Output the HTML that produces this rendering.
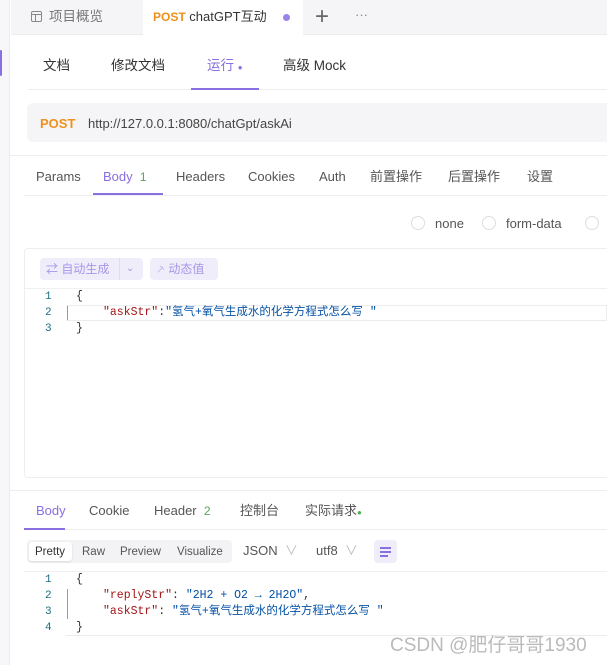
<!DOCTYPE html>
<html><head><meta charset="utf-8"><style>
*{margin:0;padding:0;box-sizing:border-box}
body{width:607px;height:665px;overflow:hidden;background:#fff;font-family:"Liberation Sans","Noto Sans CJK SC",sans-serif;color:#333;position:relative;font-size:13px}
.a{position:absolute;white-space:nowrap;line-height:16px}
.mono{font-family:"Liberation Mono","Noto Sans CJK SC",monospace;font-size:11.5px}
.ln{color:#1a6e80;font-family:"Liberation Mono",monospace;font-size:11px}
</style></head><body>
<div class="a" style="left:0;top:0;width:10px;height:665px;background:#f7f7f9;border-right:1px solid #ececef"></div>
<div class="a" style="left:0;top:50px;width:2px;height:26px;background:#8a6fe0;border-radius:2px"></div>
<div class="a" style="left:11px;top:0;width:596px;height:35px;background:#f5f5f7;border-bottom:1px solid #ececef"></div>
<div class="a" style="left:143px;top:0;width:160px;height:36px;background:#fff"></div>
<div class="a" style="left:31px;top:11px;width:11px;height:11px;border:1.3px solid #888;border-radius:2px"></div>
<div class="a" style="left:31px;top:14px;width:11px;height:1px;background:#888"></div>
<div class="a" style="left:35px;top:14px;width:1px;height:7px;background:#888"></div>
<div class="a" style="left:49px;top:9px;color:#777;font-size:13.5px">项目概览</div>
<div class="a" style="left:153px;top:9px;font-size:13px"><b style="color:#f0901c;font-size:12px">POST</b> chatGPT互动</div>
<div class="a" style="left:283px;top:14px;width:7px;height:7px;border-radius:50%;background:#9a82e6"></div>
<div class="a" style="left:315px;top:5px;font-size:24px;line-height:24px;color:#666;font-weight:300">+</div>
<div class="a" style="left:355px;top:7px;color:#888">···</div>
<div class="a" style="left:43px;top:58px;font-size:13.5px">文档</div>
<div class="a" style="left:111px;top:58px;font-size:13.5px">修改文档</div>
<div class="a" style="left:207px;top:58px;font-size:13.5px;color:#8a6fe0">运行 <span style="font-size:8px">●</span></div>
<div class="a" style="left:283px;top:58px;font-size:13.5px">高级 Mock</div>
<div class="a" style="left:28px;top:89px;width:579px;height:1px;background:#eee"></div>
<div class="a" style="left:191px;top:88px;width:68px;height:2px;background:#8a6fe0"></div>
<div class="a" style="left:27px;top:103px;width:590px;height:39px;background:#f5f5f7;border-radius:6px"></div>
<div class="a" style="left:40px;top:116px"><b style="color:#f0901c">POST</b></div>
<div class="a" style="left:88px;top:116px;color:#444">http://127.0.0.1:8080/chatGpt/askAi</div>
<div class="a" style="left:10px;top:155px;width:597px;height:1px;background:#eee"></div>
<div class="a" style="left:36px;top:169px;color:#555">Params</div>
<div class="a" style="left:103px;top:169px;color:#8a6fe0">Body &nbsp;<span style="color:#58a55c;font-size:12px">1</span></div>
<div class="a" style="left:176px;top:169px;color:#555">Headers</div>
<div class="a" style="left:248px;top:169px;color:#555">Cookies</div>
<div class="a" style="left:319px;top:169px;color:#555">Auth</div>
<div class="a" style="left:370px;top:169px;color:#555">前置操作</div>
<div class="a" style="left:448px;top:169px;color:#555">后置操作</div>
<div class="a" style="left:527px;top:169px;color:#555">设置</div>
<div class="a" style="left:24px;top:195px;width:583px;height:1px;background:#eee"></div>
<div class="a" style="left:93px;top:193px;width:70px;height:2px;background:#8a6fe0"></div>
<div class="a" style="left:411px;top:216px;width:14px;height:14px;border:1px solid #ddd;border-radius:50%"></div>
<div class="a" style="left:435px;top:216px;color:#555">none</div>
<div class="a" style="left:482px;top:216px;width:14px;height:14px;border:1px solid #ddd;border-radius:50%"></div>
<div class="a" style="left:506px;top:216px;color:#555">form-data</div>
<div class="a" style="left:585px;top:216px;width:14px;height:14px;border:1px solid #ddd;border-radius:50%"></div>
<div class="a" style="left:24px;top:248px;width:600px;height:230px;border:1px solid #eee;border-radius:4px"></div>
<div class="a" style="left:25px;top:288px;width:582px;height:1px;background:#f0f0f0"></div>
<div class="a" style="left:40px;top:258px;width:103px;height:22px;background:#f0edfb;border-radius:4px"></div>
<div class="a" style="left:119px;top:258px;width:1px;height:22px;background:#e0dbf5"></div>
<div class="a" style="left:46px;top:261px;font-size:12px;color:#a796e8">⇄ 自动生成</div>
<div class="a" style="left:126px;top:261px;font-size:10px;color:#a796e8">⌄</div>
<div class="a" style="left:150px;top:258px;width:68px;height:22px;background:#f0edfb;border-radius:4px"></div>
<div class="a" style="left:156px;top:261px;font-size:12px;color:#a796e8">⸕ 动态值</div>
<div class="a ln" style="left:45px;top:289px">1</div>
<div class="a ln" style="left:45px;top:305px">2</div>
<div class="a ln" style="left:45px;top:321px">3</div>
<div class="a mono" style="left:76px;top:289px">{</div>
<div class="a" style="left:66px;top:305px;width:541px;height:16px;border:1px solid #ececec;border-left:none"></div>
<div class="a" style="left:67px;top:306px;width:1px;height:14px;background:#999"></div>
<div class="a mono" style="left:103px;top:305px"><span style="color:#a31515">"askStr"</span>:<span style="color:#0451a5">"氢气+氧气生成水的化学方程式怎么写 "</span></div>
<div class="a mono" style="left:76px;top:321px">}</div>
<div class="a" style="left:10px;top:490px;width:597px;height:1px;background:#eee"></div>
<div class="a" style="left:36px;top:503px;color:#8a6fe0">Body</div>
<div class="a" style="left:89px;top:503px;color:#555">Cookie</div>
<div class="a" style="left:154px;top:503px;color:#555">Header &nbsp;<span style="color:#58a55c;font-size:12px">2</span></div>
<div class="a" style="left:240px;top:503px;color:#555">控制台</div>
<div class="a" style="left:305px;top:503px;color:#555">实际请求<span style="color:#4caf50;font-size:8px">●</span></div>
<div class="a" style="left:24px;top:529px;width:583px;height:1px;background:#eee"></div>
<div class="a" style="left:24px;top:528px;width:41px;height:2px;background:#8a6fe0"></div>
<div class="a" style="left:27px;top:540px;width:205px;height:23px;background:#f3f3f5;border-radius:4px"></div>
<div class="a" style="left:29px;top:542px;width:43px;height:19px;background:#fff;border-radius:3px;box-shadow:0 1px 2px rgba(0,0,0,.1)"></div>
<div class="a" style="left:35px;top:544px;font-size:11.5px">Pretty</div>
<div class="a" style="left:82px;top:544px;font-size:11.5px;color:#555">Raw</div>
<div class="a" style="left:120px;top:544px;font-size:11.5px;color:#555">Preview</div>
<div class="a" style="left:177px;top:544px;font-size:11.5px;color:#555">Visualize</div>
<div class="a" style="left:243px;top:543px;color:#555">JSON &nbsp;<span style="color:#bbb">∨</span></div>
<div class="a" style="left:316px;top:543px;color:#555">utf8 &nbsp;<span style="color:#bbb">∨</span></div>
<div class="a" style="left:374px;top:540px;width:23px;height:23px;background:#f0edfb;border-radius:4px"></div>
<div class="a" style="left:380px;top:547px;width:11px;height:1.5px;background:#8a6fe0"></div>
<div class="a" style="left:380px;top:551px;width:11px;height:1.5px;background:#8a6fe0"></div>
<div class="a" style="left:380px;top:555px;width:8px;height:1.5px;background:#8a6fe0"></div>
<div class="a" style="left:24px;top:571px;width:583px;height:1px;background:#f0f0f0"></div>
<div class="a ln" style="left:45px;top:572px">1</div>
<div class="a ln" style="left:45px;top:588px">2</div>
<div class="a ln" style="left:45px;top:604px">3</div>
<div class="a ln" style="left:45px;top:620px">4</div>
<div class="a" style="left:67px;top:589px;width:1px;height:30px;background:#999"></div>
<div class="a mono" style="left:76px;top:572px">{</div>
<div class="a mono" style="left:103px;top:588px"><span style="color:#a31515">"replyStr"</span>: <span style="color:#0451a5">"2H2 + O2 → 2H2O"</span>,</div>
<div class="a mono" style="left:103px;top:604px"><span style="color:#a31515">"askStr"</span>: <span style="color:#0451a5">"氢气+氧气生成水的化学方程式怎么写 "</span></div>
<div class="a mono" style="left:76px;top:620px">}</div>
<div class="a" style="left:66px;top:620px;width:541px;height:16px;border-bottom:1px solid #ececec"></div>
<div class="a" style="left:390px;top:635px;font-size:19px;line-height:22px;color:#aaa;opacity:.8">CSDN @肥仔哥哥1930</div>
</body></html>
